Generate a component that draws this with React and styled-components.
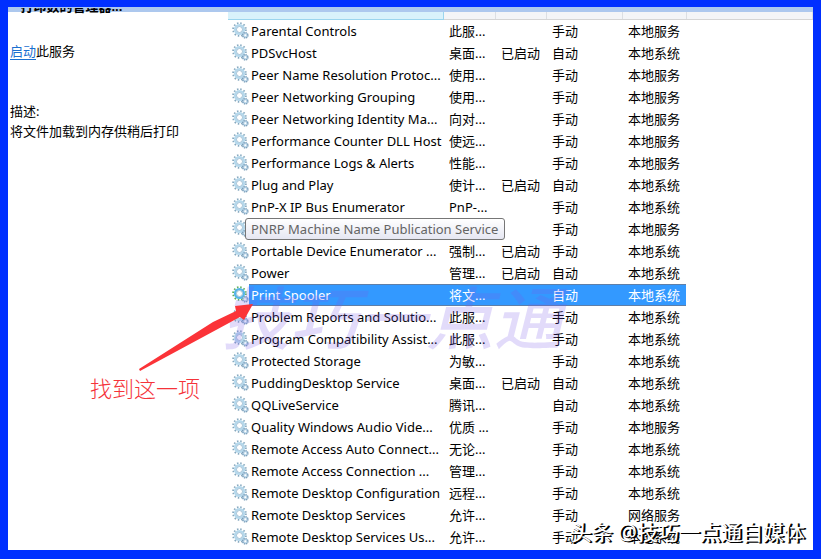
import React from "react";
import styled, { createGlobalStyle } from "styled-components";

const services = [
  ["Parental Controls", "此服...", "", "手动", "本地服务"],
  ["PDSvcHost", "桌面...", "已启动", "自动", "本地系统"],
  ["Peer Name Resolution Protoc...", "使用...", "", "手动", "本地服务"],
  ["Peer Networking Grouping", "使用...", "", "手动", "本地服务"],
  ["Peer Networking Identity Ma...", "向对...", "", "手动", "本地服务"],
  ["Performance Counter DLL Host", "使远...", "", "手动", "本地服务"],
  ["Performance Logs & Alerts", "性能...", "", "手动", "本地服务"],
  ["Plug and Play", "使计...", "已启动", "自动", "本地系统"],
  ["PnP-X IP Bus Enumerator", "PnP-...", "", "手动", "本地系统"],
  ["PNRP Machine Name Publication Service", "", "", "手动", "本地服务"],
  ["Portable Device Enumerator ...", "强制...", "已启动", "手动", "本地系统"],
  ["Power", "管理...", "已启动", "自动", "本地系统"],
  ["Print Spooler", "将文...", "", "自动", "本地系统"],
  ["Problem Reports and Solutio...", "此服...", "", "手动", "本地系统"],
  ["Program Compatibility Assist...", "此服...", "", "手动", "本地系统"],
  ["Protected Storage", "为敏...", "", "手动", "本地系统"],
  ["PuddingDesktop Service", "桌面...", "已启动", "自动", "本地系统"],
  ["QQLiveService", "腾讯...", "", "自动", "本地系统"],
  ["Quality Windows Audio Vide...", "优质 ...", "", "手动", "本地服务"],
  ["Remote Access Auto Connect...", "无论...", "", "手动", "本地系统"],
  ["Remote Access Connection ...", "管理...", "", "手动", "本地系统"],
  ["Remote Desktop Configuration", "远程...", "", "手动", "本地系统"],
  ["Remote Desktop Services", "允许...", "", "手动", "网络服务"],
  ["Remote Desktop Services Us...", "允许...", "", "手动", "本地系统"],
];

const SELECTED = "Print Spooler";
const HOVERED = "PNRP Machine Name Publication Service";

const GearIcon = ({ active }) => (
  <Gear viewBox="0 0 17 17" aria-hidden="true">
    <circle
      cx="7.5"
      cy="7.5"
      r="6.4"
      fill="none"
      stroke={active ? "#5cae5c" : "#87a9bf"}
      strokeWidth="1.8"
      strokeDasharray="1.5 1.85"
    />
    <circle cx="7.5" cy="7.5" r="4.4" fill="none" stroke={active ? "#55b5e8" : "#b5d8ec"} strokeWidth="2.4" />
    <circle cx="7.5" cy="7.5" r="3" fill="#fff" stroke="#7fa9c6" strokeWidth="0.7" />
    <circle cx="13.3" cy="13.3" r="2.7" fill="#b9d5e8" stroke="#7d9fba" strokeWidth="1.4" strokeDasharray="1.3 0.8" />
    <circle cx="13.3" cy="13.3" r="1" fill="#fff" />
  </Gear>
);

const App = () => {
  return (
    <Frame>
      <GlobalStyle />
      <TopStrip />
      <Content>
        <Sidebar>
          <Title>* 打印数的管理器...</Title>
          <Action>
            <a href="#start">启动</a>此服务
          </Action>
          <Description>
            描述:
            <br />
            将文件加载到内存供稍后打印
          </Description>
        </Sidebar>
        <ListPane>
          <Table>
            <colgroup>
              <col width="215" />
              <col width="52" />
              <col width="51" />
              <col width="76" />
              <col width="64" />
              <col />
            </colgroup>
            <thead>
              <tr>
                <HeadCell $sorted />
                <HeadCell />
                <HeadCell />
                <HeadCell />
                <HeadCell />
                <HeadCell />
              </tr>
            </thead>
            <tbody>
              {services.map(([name, desc, status, startup, account]) => {
                const selected = name === SELECTED;
                return (
                  <Row key={name} $selected={selected}>
                    <td>
                      <NameCell>
                        <GearIcon active={selected} />
                        {name === HOVERED ? (
                          <Tip>{name}</Tip>
                        ) : (
                          <Name $selected={selected}>{name}</Name>
                        )}
                      </NameCell>
                    </td>
                    <td>{desc}</td>
                    <td>{status}</td>
                    <td>{startup}</td>
                    <td>{account}</td>
                  </Row>
                );
              })}
            </tbody>
          </Table>
        </ListPane>
      </Content>
      <BrushMark>技巧一点通</BrushMark>
      <Arrow viewBox="0 0 116 68" aria-hidden="true">
        <path d="M1 65 L75 18 L98 7 L97 2 L115 0 L106 16 L102 13 L78 26 L2 67 Z" fill="#fb3338" />
      </Arrow>
      <Note>找到这一项</Note>
      <Credit>头条 @技巧一点通自媒体</Credit>
    </Frame>
  );
};

export default App;

const GlobalStyle = createGlobalStyle`
  * {
    box-sizing: border-box;
  }
  body {
    margin: 0;
    background: #002fff;
  }
`;

//blue frame round the window
const Frame = styled.main`
  position: relative;
  min-height: 100vh;
  padding: 7px 8px 9px;
  overflow: hidden;
  background: #002fff;
  color: #000;
  font: 13px/20px "Noto Sans", "Noto Sans CJK SC", sans-serif;
`;

const TopStrip = styled.div`
  height: 5px;
  background: #adc8ee;
`;

const Content = styled.div`
  display: flex;
  padding-bottom: 2px;
  background: #fff;
`;

const Sidebar = styled.aside`
  flex: 0 0 220px;
  padding-left: 2px;
`;

const Title = styled.h2`
  display: flex;
  align-items: flex-end;
  height: 6px;
  margin: -4px 0 27px;
  overflow: hidden;
  font-size: 13px;
  line-height: 16px;
`;

const Action = styled.p`
  margin: 0 0 40px;
  a {
    color: #1a6fd0;
    text-underline-offset: 3px;
  }
`;

const Description = styled.p`
  margin: 0;
`;

const ListPane = styled.section`
  flex: 1;
  min-width: 0;
`;

const Table = styled.table`
  width: 100%;
  table-layout: fixed;
  border-collapse: collapse;
  td {
    height: 22px;
    padding: 0 0 0 6px;
    line-height: 20px;
    white-space: nowrap;
  }
  td:first-child {
    padding-left: 4px;
  }
`;

const HeadCell = styled.th`
  height: 7px;
  padding: 0;
  background: ${(props) => (props.$sorted ? "#d9f2fb" : "#f4f5f7")};
  border-right: 1px solid ${(props) => (props.$sorted ? "#9bd5ee" : "#dcdfe3")};
  border-bottom: 1px solid ${(props) => (props.$sorted ? "#9bd5ee" : "#d5d5d5")};
`;

const selectedFill = `
  background: #3399ff;
  box-shadow: inset 0 1px #5f7fa8, inset 0 -1px #5f7fa8;
`;

const Row = styled.tr`
  ${(props) =>
    props.$selected &&
    `
    color: #fff;
    td:not(:first-child) {
      ${selectedFill}
    }
  `}
`;

const NameCell = styled.div`
  display: flex;
  align-items: center;
  height: 22px;
`;

const Gear = styled.svg`
  flex: none;
  width: 17px;
  height: 17px;
`;

const Name = styled.span`
  flex: 1;
  height: 22px;
  padding-left: 2px;
  line-height: 22px;
  ${(props) => props.$selected && selectedFill}
`;

const Tip = styled.span`
  z-index: 1;
  flex: none;
  margin-left: -4px;
  padding: 0 6px 0 5px;
  border: 1px solid #767676;
  border-radius: 3px;
  background: linear-gradient(#fff, #e6e7f2);
  color: #646464;
`;

const BrushMark = styled.div`
  position: absolute;
  top: 274px;
  left: 222px;
  color: rgba(122, 92, 232, 0.22);
  font-size: 68px;
  font-style: italic;
  font-weight: 500;
  line-height: 88px;
  pointer-events: none;
`;

const Arrow = styled.svg`
  position: absolute;
  top: 304px;
  left: 138px;
  width: 116px;
  height: 68px;
`;

const Note = styled.div`
  position: absolute;
  top: 373px;
  left: 90px;
  color: #f5333a;
  font-size: 22px;
  font-weight: 300;
  line-height: 30px;
`;

const Credit = styled.div`
  position: absolute;
  right: 16px;
  bottom: 11px;
  color: #fff;
  font-size: 21px;
  line-height: 32px;
  text-shadow: 1px 1px 0 #000, 2px 1px 0 #000;
`;
